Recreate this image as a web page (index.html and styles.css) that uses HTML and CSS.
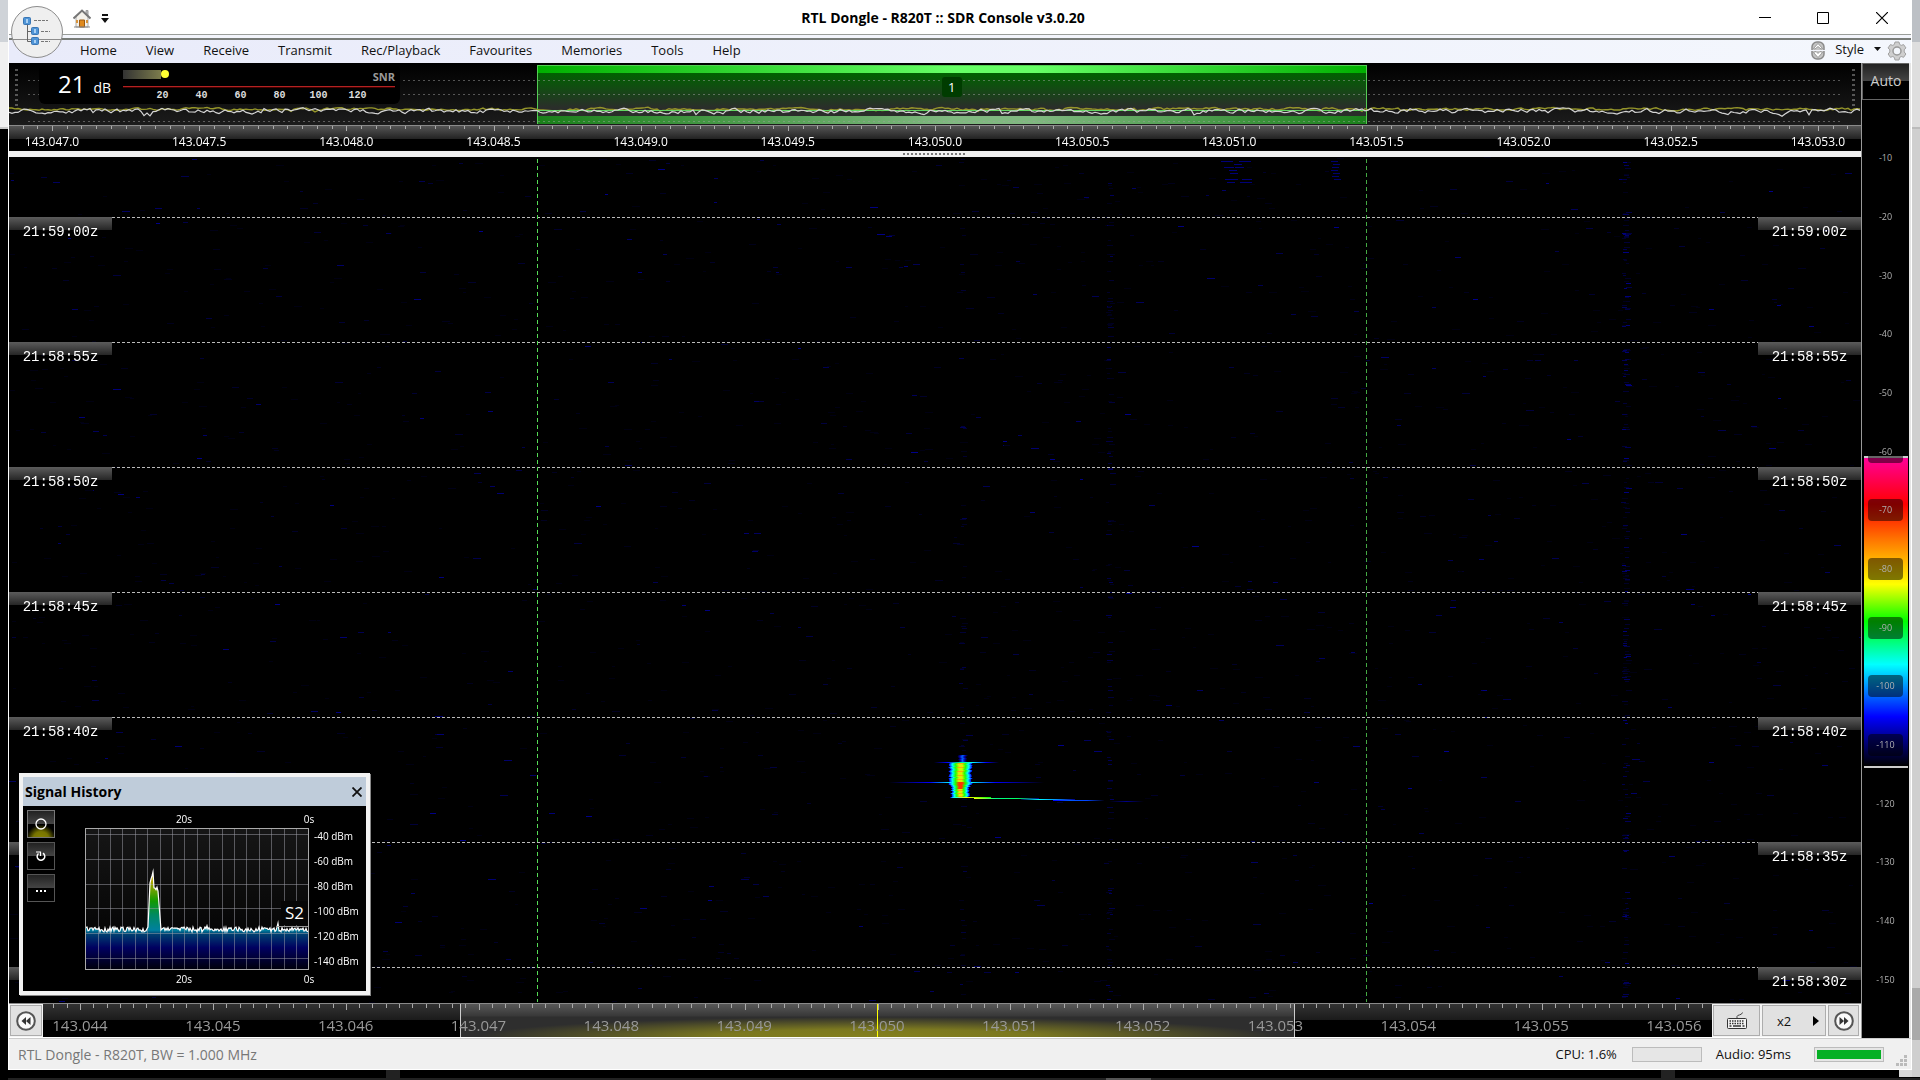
FILE: index.html
```html
<!DOCTYPE html>
<html lang="en">
<head>
<meta charset="utf-8">
<title>RTL Dongle - R820T :: SDR Console v3.0.20</title>
<link rel="stylesheet" href="styles.css">
</head>
<body>
<div class="window">
  <button class="app-button" aria-label="Application menu">
    <svg width="28" height="30" viewBox="0 0 28 30">
      <path d="M4.500 8v17.500h5M4.500 15.500h5" fill="none" stroke="#666" stroke-width="1"/>
      <path d="M11 4.500h14M18 15.500h9M18 25.500h9" stroke="#777" stroke-width="1" stroke-dasharray="3 1"/>
      <g fill="#4f94d6" stroke="#3a76b4"><rect x=".5" y="1.500" width="7" height="7" rx="1"/><rect x="8.500" y="11.500" width="7" height="7" rx="1"/><rect x="8.500" y="21.500" width="7" height="7" rx="1"/></g>
      <g fill="#a9d0f3"><rect x="3" y="3" width="2" height="4"/><rect x="11" y="13" width="2" height="4"/><rect x="11" y="24" width="2" height="3"/></g>
    </svg>
  </button>
  <header class="titlebar">
    <div class="quick">
      <button class="plain" aria-label="Home">
        <svg width="18" height="19" viewBox="0 0 18 19">
          <path d="M13 1.500h2v6h-2z" fill="#bbb" stroke="#999"/>
          <path d="M3 8l6-6 6 6v10H3z" fill="#f4f1ea" stroke="#aaa"/>
          <path d="M.5 9.500L9 1.500l8.500 8" fill="none" stroke="#777" stroke-width="2"/>
          <path d="M6.500 11h5v7h-5z" fill="#e08a1e" stroke="#9a5a14"/>
          <path d="M3 11h2v3H3zM13 11h2v3h-2z" fill="#d8953c"/><path d="M1 18h16" stroke="#888"/>
        </svg>
      </button>
      <button class="plain" aria-label="Customise quick access">
        <svg width="8" height="9" viewBox="0 0 8 9"><path d="M1 0h6v2H1zM0 4h8L4 9z" fill="#111"/></svg>
      </button>
    </div>
    <h1 class="title">RTL Dongle - R820T :: SDR Console v3.0.20</h1>
    <div class="winbuttons">
      <button class="plain" aria-label="Minimise"><svg width="12" height="12" viewBox="0 0 12 12"><path d="M0 5.500h12" stroke="#000"/></svg></button>
      <button class="plain" aria-label="Maximise"><svg width="12" height="12" viewBox="0 0 12 12"><path d="M.5.500h11v11H.5z" fill="none" stroke="#000"/></svg></button>
      <button class="plain" aria-label="Close"><svg width="12" height="12" viewBox="0 0 12 12"><path d="M0 0l12 12M12 0L0 12" stroke="#000" stroke-width="1.200"/></svg></button>
    </div>
  </header>
  <nav class="menubar">
    <a href="#">Home</a><a href="#">View</a><a href="#">Receive</a><a href="#">Transmit</a><a href="#">Rec/Playback</a><a href="#">Favourites</a><a href="#">Memories</a><a href="#">Tools</a><a href="#">Help</a>
    <div class="menuright">
      <button class="plain" aria-label="Collapse ribbon">
        <svg width="14" height="19" viewBox="0 0 14 19"><rect x="1" y="1" width="12" height="17" rx="5" fill="#c4c4c4" stroke="#8a8a8a" stroke-width="1.500"/><path d="M2.500 7.500L7 2.500l4.500 5L10 8 7 5.500 4 8zM2.500 11.500l4.500 5 4.500-5-2.500-1L7 12.500l-2-2z" fill="#fff" stroke="#888" stroke-width=".8"/><path d="M0 9.500h14" stroke="#f2f4fc"/></svg>
      </button>
      <button class="plain style-button">Style <svg width="7" height="4" viewBox="0 0 7 4"><path d="M0 0h7L3.500 4z" fill="#111"/></svg></button>
      <button class="plain" aria-label="Settings">
        <svg width="20" height="20" viewBox="0 0 20 20"><path d="M8 1h4l.6 2.400 1.600 1L16.600 3.600l2.300 3.300-1.700 1.900v2.200l1.700 2-2.300 3.300-2.400-.8-1.600 1L12 19H8l-.6-2.500-1.600-1-2.400.8L1.100 13l1.700-2V8.800L1.100 6.900l2.300-3.300 2.400.8 1.600-1z" fill="#cfcfcf" stroke="#a0a0a0"/><circle cx="10" cy="10" r="4" fill="#f4f7fc" stroke="#999" stroke-width="1.500"/></svg>
      </button>
    </div>
  </nav>

  <main class="main">
    <section class="display">
      <div class="spectrum">
        <div class="passband"><div class="pass-top"></div><div class="pass-body"></div><div class="pass-foot"></div></div>
        <canvas class="layer" id="trace"></canvas>
        <div class="passband-label"><span>1</span></div>
        <div class="meter">
          <div class="reading"><span class="value">21</span><span class="unit">dB</span></div>
          <div class="scale">
            <div class="scale-top"><span class="level"></span><span class="knob"></span><span class="kind">SNR</span></div>
            <div class="redline"></div>
            <div class="scale-nums"><span>20</span><span>40</span><span>60</span><span>80</span><span>100</span><span>120</span></div>
          </div>
        </div>
      </div>
      <div class="ruler">
        <canvas class="layer" id="ticks"></canvas>
        <span>143.047.0</span><span>143.047.5</span><span>143.048.0</span><span>143.048.5</span><span>143.049.0</span><span>143.049.5</span><span>143.050.0</span><span>143.050.5</span><span>143.051.0</span><span>143.051.5</span><span>143.052.0</span><span>143.052.5</span><span>143.053.0</span>
      </div>
      <div class="splitter"><i></i></div>
      <div class="waterfall">
        <canvas class="layer" id="fall"></canvas>
        <div class="lead"></div>
        <div class="row"><time>21:59:00z</time><i></i><time>21:59:00z</time></div>
        <div class="row"><time>21:58:55z</time><i></i><time>21:58:55z</time></div>
        <div class="row"><time>21:58:50z</time><i></i><time>21:58:50z</time></div>
        <div class="row"><time>21:58:45z</time><i></i><time>21:58:45z</time></div>
        <div class="row"><time>21:58:40z</time><i></i><time>21:58:40z</time></div>
        <div class="row"><time>21:58:35z</time><i></i><time>21:58:35z</time></div>
        <div class="row tail"><time>21:58:30z</time><i></i><time>21:58:30z</time></div>
        <div class="edges"></div>

        <section class="history">
          <header><h2>Signal History</h2>
            <button class="plain" aria-label="Close Signal History"><svg width="10" height="10" viewBox="0 0 10 10"><path d="M.5.500l9 9M9.500.500l-9 9" stroke="#111" stroke-width="1.800"/></svg></button>
          </header>
          <div class="history-body">
            <div class="tools">
              <button class="tool on" aria-label="Run"><svg width="12" height="12" viewBox="0 0 12 12"><circle cx="6" cy="6" r="5" fill="none" stroke="#fff" stroke-width="1.300"/></svg></button>
              <button class="tool" aria-label="Reset"><svg width="10" height="10" viewBox="0 0 10 10"><path d="M7 2.200A3.800 3.800 0 1 1 2.500 2.500" fill="none" stroke="#fff" stroke-width="1.500"/><path d="M0 1h4.500v4" fill="none" stroke="#fff" stroke-width="1.200"/></svg></button>
              <button class="tool" aria-label="More"><svg class="dots" width="10" height="2" viewBox="0 0 10 2"><path d="M0 0h2v2H0zM4 0h2v2H4zM8 0h2v2H8z" fill="#fff"/></svg></button>
            </div>
            <div class="chart">
              <div class="secs"><span>20s</span><span>0s</span></div>
              <div class="plot"><canvas class="layer" id="hist"></canvas><span class="sunit">S2</span></div>
              <div class="secs"><span>20s</span><span>0s</span></div>
            </div>
            <div class="dbm"><span>-40 dBm</span><span>-60 dBm</span><span>-80 dBm</span><span>-100 dBm</span><span>-120 dBm</span><span>-140 dBm</span></div>
          </div>
        </section>
      </div>
      <div class="navrow">
        <button class="navbtn square" aria-label="Scroll left"><svg width="20" height="20" viewBox="0 0 20 20"><circle cx="10" cy="10" r="8.800" fill="#fafafa" stroke="#555" stroke-width="2"/><path d="M10 6v8l-4.500-4zM14.500 6v8L10 10z" fill="#333"/></svg></button>
        <div class="band">
          <div class="visible"></div>
          <canvas class="layer" id="bandticks"></canvas>
          <span>143.044</span><span>143.045</span><span>143.046</span><span>143.047</span><span>143.048</span><span>143.049</span><span>143.050</span><span>143.051</span><span>143.052</span><span>143.053</span><span>143.054</span><span>143.055</span><span>143.056</span>
        </div>
        <div class="navbtns">
          <button class="navbtn key" aria-label="Keyboard"><svg width="20" height="17" viewBox="0 0 20 17"><path d="M10 7V4.500c0-2 5-1 5.500-4" fill="none" stroke="#444"/><rect x=".5" y="6.500" width="19" height="10" rx="1" fill="#f2f2f2" stroke="#333"/><path d="M2.500 9h15M2.500 11.500h15" stroke="#333" stroke-width="1.500" stroke-dasharray="1.500 1"/><path d="M2.500 14h2M6 14h8M15.500 14h2" stroke="#333" stroke-width="1.500"/></svg></button>
          <button class="navbtn zoom">x2<svg width="6" height="10" viewBox="0 0 6 10"><path d="M0 0l6 5-6 5z" fill="#000"/></svg></button>
          <button class="navbtn square" aria-label="Scroll right"><svg width="20" height="20" viewBox="0 0 20 20"><circle cx="10" cy="10" r="8.800" fill="#fafafa" stroke="#555" stroke-width="2"/><path d="M10 6v8l4.500-4zM5.500 6v8L10 10z" fill="#333"/></svg></button>
        </div>
      </div>
    </section>
    <aside class="side">
      <button class="auto">Auto</button>
      <div class="levels">
        <div class="rainbow"></div>
        <span>-10</span><span>-20</span><span>-30</span><span>-40</span><span>-50</span><span>-60</span><span>-70</span><span>-80</span><span>-90</span><span>-100</span><span>-110</span><span>-120</span><span>-130</span><span>-140</span><span>-150</span>
      </div>
    </aside>
  </main>

  <footer class="status">
    <span class="device">RTL Dongle - R820T, BW = 1.000 MHz</span>
    <label for="cpu">CPU: 1.6%</label><progress id="cpu" max="100" value="0"></progress>
    <label for="audio">Audio: 95ms</label><progress id="audio" max="100" value="100"></progress>
    <svg class="grip" width="12" height="12" viewBox="0 0 12 12"><path d="M8 0h3v3H8zM4 4h3v3H4zM8 4h3v3H8zM0 8h3v3H0zM4 8h3v3H4zM8 8h3v3H8z" fill="#bbb"/></svg>
  </footer>
</div>
<script src="script.js"></script>
</body>
</html>
```
FILE: styles.css
```css
* { box-sizing: border-box; }
body {
  margin: 0;
  height: 100vh;
  padding: 0 8px 10px;
  font-family: "Open Sans", "Noto Sans", sans-serif;
  font-size: 13px;
  background:
    linear-gradient(#555, #555) 1106px 100% / 45px 2px no-repeat,
    linear-gradient(#222, #222) 386px 100% / 14px 10px no-repeat,
    linear-gradient(#222, #222) 1661px 100% / 14px 10px no-repeat,
    linear-gradient(#aaa, #aaa) 100% 988px / 8px 52px no-repeat,
    linear-gradient(#bcc0c5 42px, #dedede 42px, #dedede 127px, #bbb 127px, #bbb 129px, #cfcfcf 129px) 100% 0 / 8px calc(100% - 3px) no-repeat,
    linear-gradient(#cfd3d8 42px, #f0f0f0 42px, #f0f0f0 127px, #c8c8c8 127px, #c8c8c8 129px, #000 129px) 0 0 / 8px 100% no-repeat,
    linear-gradient(#d8d8d8, #d8d8d8) 100% calc(100% - 3px) / 21px 8px no-repeat,
    linear-gradient(#222, #222) 0 100% / 100% 2px no-repeat,
    #000;
}
h1, h2 { margin: 0; font-size: 14px; font-weight: bold; }
button { font-family: inherit; font-size: 13px; padding: 0; margin: 0; color: #111; }
svg { display: block; }
.plain { border: 0; background: none; display: flex; align-items: center; justify-content: center; }
.layer { position: absolute; left: 0; top: 0; width: 100%; height: 100%; }
.window { position: relative; height: 100%; display: flex; flex-direction: column; background: #fff; border: 0 solid #fff; border-width: 0 1px 1px; }

.app-button { position: absolute; z-index: 5; left: 2px; top: 6px; width: 52px; height: 52px; border-radius: 50%; border: 1px solid #8c8c8c; background: linear-gradient(#8c8c8c, #8c8c8c) 0 32px / 100% 1px no-repeat, #efefef; display: flex; align-items: center; justify-content: center; padding-bottom: 2px; }
.titlebar { flex: none; height: 35px; display: grid; grid-template-columns: 141px 1fr 175px; align-items: center; padding-top: 2px; border-bottom: 1px solid #9a9e9a; color: #000; }
.quick { display: flex; gap: 10px; padding-left: 64px; }
.title { text-align: center; padding-bottom: 2px; }
.winbuttons { display: grid; grid-template-columns: 1fr 1fr 1fr; }
.menubar { flex: none; height: 28px; border-top: 3px solid #f3f5fc; display: flex; align-items: center; gap: 29px; padding: 0 4px 0 71px; background: linear-gradient(90deg, #e9ebfa, #f4f7fd); box-shadow: inset 0 2px #787c78; color: #111; }
.menubar a { color: #111; text-decoration: none; padding-bottom: 2px; }
.menuright { margin-left: auto; display: flex; align-items: center; gap: 6px; }
.style-button { gap: 10px; padding: 0 0 3px 4px; }

.main { flex: 1; min-height: 0; display: grid; grid-template-columns: 1fr 48px; background: #000; border-right: 2px solid #e4e4e4; }
.display { min-width: 0; display: flex; flex-direction: column; color: #fff; }
.spectrum { position: relative; height: 62px; background: linear-gradient(#000, #1c1c1c); flex: none; }
.passband { position: absolute; left: 28.500%; width: 44.800%; top: 2px; bottom: 1px; display: flex; flex-direction: column; border: 1px solid #5c5; border-width: 1px 1px 0; }
.pass-top { height: 7px; background: linear-gradient(90deg, #00b000, #6f6 50%, #6f6 60%, #00b000); }
.pass-body { flex: 1; background: linear-gradient(#006200, #2a2e2a 80%); }
.pass-foot { height: 8px; background: linear-gradient(90deg, #1a801a, #80b880 50%, #80b880 60%, #1a801a); }
.passband-label { position: absolute; left: 28.500%; width: 44.800%; top: 14px; display: flex; justify-content: center; }
.passband-label span { width: 20px; height: 20px; line-height: 20px; text-align: center; border-radius: 3px; background: #003c00; }
.meter { position: absolute; left: 30px; top: 2px; width: 361px; height: 39px; border-radius: 6px; background: #000; display: flex; padding: 5px 5px 0 19px; }
.reading { width: 65px; display: flex; align-items: baseline; gap: 8px; line-height: 28px; }
.value { font-size: 24px; }
.unit { font-size: 14px; }
.scale { flex: 1; }
.scale-top { height: 16px; display: flex; align-items: flex-start; }
.level { width: 38px; height: 9px; background: linear-gradient(90deg, #333, #7c7c4c); }
.knob { width: 8px; height: 8px; border-radius: 50%; background: #ff3; }
.kind { margin-left: auto; color: #999; font-weight: bold; font-size: 11px; line-height: 14px; }
.redline { height: 1px; background: #b22222; box-shadow: 0 1px #400; }
.scale-nums { display: flex; padding: 2px 0 0 20px; font: bold 10px/14px "Liberation Mono", monospace; color: #ddd; }
.scale-nums span { width: 39px; text-align: center; }

.ruler { position: relative; flex: none; height: 26px; border-top: 1px solid #8a8a8a; background: linear-gradient(#555, #222 13px, #000 13px); display: flex; justify-content: space-between; padding: 7px 13px 0; font-size: 12px; line-height: 18px; }
.ruler span { width: 60px; text-align: center; position: relative; }
.splitter { flex: none; height: 6px; background: #f0f0f0; display: flex; justify-content: center; padding-top: 2px; }
.splitter i { width: 64px; height: 2px; background: repeating-linear-gradient(90deg, #777 0 2px, transparent 2px 4px); }

.waterfall { position: relative; flex: 1; min-height: 0; display: flex; flex-direction: column; background: #000; }
.lead { flex: 60 0 0; }
.row { position: relative; flex: 125 0 0; min-height: 0; display: flex; align-items: flex-start; }
.row.tail { flex-grow: 36; }
.row i { flex: 1; height: 1px; background: repeating-linear-gradient(90deg, #bbb 0 3px, transparent 3px 5px); }
.row time { width: 103px; height: 24px; padding-top: 8px; text-align: center; font: 14px/15px "Liberation Mono", monospace; background: linear-gradient(#5c5c5c, #262626) 0 0 / 100% 13px no-repeat; }
.edges { position: absolute; left: 28.500%; width: 44.800%; top: 2px; bottom: 1px; background: repeating-linear-gradient(#5d5 0 4px, transparent 4px 7px) 0 0 / 1px 100% no-repeat, repeating-linear-gradient(#4a4 0 4px, transparent 4px 7px) 100% 0 / 1px 100% no-repeat; }

.history { position: absolute; left: 10px; bottom: 8px; width: 351px; border: 4px solid #f2f2f2; background: #000; box-shadow: 1px 1px #888; }
.history header { height: 29px; display: flex; align-items: center; justify-content: space-between; padding: 0 4px 0 2px; background: #bfccda; color: #000; }
.history-body { display: flex; height: 185px; padding: 4px; }
.tools { width: 28px; display: flex; flex-direction: column; gap: 4px; }
.tool { height: 28px; border: 1px solid #555; background: linear-gradient(#222, #444 13px, #000 13px); display: flex; align-items: center; justify-content: center; }
.tool.on { border-color: #777; background: radial-gradient(circle at 50% 110%, #8a8600 0, #777400 8px, transparent 15px), linear-gradient(#222, #444 13px, #000 13px); }
.tool .dots { margin-top: 5px; }
.chart { width: 224px; margin-left: 30px; }
.secs { height: 18px; display: flex; justify-content: space-between; padding-left: 86px; margin-right: -13px; font-size: 10px; line-height: 18px; }
.secs span { width: 26px; text-align: center; }
.plot { position: relative; height: 142px; border: 1px solid #aaa; background: linear-gradient(#161616, #000); display: flex; justify-content: flex-end; padding-top: 72px; }
.sunit { position: relative; width: 27px; height: 24px; font-size: 17px; line-height: 24px; text-align: center; background: #060606; }
.dbm { margin-left: 5px; padding: 13px 0 14px; font-size: 10px; line-height: 12px; display: flex; flex-direction: column; justify-content: space-around; white-space: nowrap; }

.navrow { flex: none; height: 35px; border-top: 1px solid #8a8a8a; display: grid; grid-template-columns: 34px 1fr 149px; background: #f4f4f4; border-bottom: 1px solid #fff; }
.navbtn { border: 1px solid #adadad; background: #e1e1e1; display: flex; align-items: center; justify-content: center; }
.square { margin: 1px; }
.band { position: relative; background: linear-gradient(#333, #1b1b1b 16px, #000 16px); display: flex; justify-content: space-between; padding: 10px 5px 0 4px; color: #999; font-size: 15px; line-height: 22px; overflow: hidden; }
.band span { position: relative; width: 66px; text-align: center; }
.visible { position: absolute; left: 25%; width: 50%; top: 0; bottom: 0; border: 1px solid #ccc; border-width: 0 1px; background: linear-gradient(#ff0, #ff0) 50% 0 / 1px 100% no-repeat, radial-gradient(ellipse 48% 20px at 50% 100%, #84801e 0, #7b7820 40%, transparent 100%), linear-gradient(#585858, #383838 12px, #2e2e2e 13px); }
.navbtns { display: grid; grid-template-columns: 47px 64px 31px; gap: 2px; padding: 1px; }
.navbtns .square { margin: 0; }
.zoom { gap: 22px; padding-left: 8px; }

.side { border-left: 1px solid #999; display: flex; flex-direction: column; }
.auto { height: 37px; border: 1px solid #666; border-right: 0; background: linear-gradient(#222, #444 17px, #000 17px); color: #ccc; font-size: 14px; padding-bottom: 2px; }
.levels { position: relative; flex: 1; padding: 29px 0; display: grid; grid-auto-rows: 1fr; align-items: center; justify-items: center; font-size: 9px; }
.levels span { position: relative; width: 35px; height: 22px; line-height: 22px; text-align: center; border-radius: 4px; background: rgba(0, 0, 0, .5); color: #b0b0b0; }
.rainbow { position: absolute; left: 2px; right: 1px; top: 38%; height: 33.200%; border: 0 solid #ccc; border-width: 2px 0; background: linear-gradient(#ff0098, #f00 15%, #ff7a00 27%, #ff0 41%, #0f0 53%, #0ff 67%, #00f 84%, #000); }

.status { flex: none; height: 31px; border-top: 1px solid #ccc; background: #f0f0f0; display: flex; align-items: center; padding: 0 3px 0 9px; color: #111; }
.device { color: #777; margin-right: auto; font-size: 14px; }
.status label { margin-right: 15px; }
progress { -webkit-appearance: none; appearance: none; width: 70px; height: 15px; border: 1px solid #bcbcbc; padding: 2px; background: #e6e6e6; margin-right: 14px; }
#audio { margin-left: 8px; margin-right: 12px; }
progress::-webkit-progress-bar { background: #e6e6e6; }
progress::-webkit-progress-value { background: #06b025; }
.grip { margin-top: 14px; }
```
FILE: script.js
```js
// Small seeded generator, so every load draws the same noise.
let seed = 7;
const rnd = () => (seed = (seed * 16807) % 2147483647) / 2147483647;

function surface(id) {
  const c = document.getElementById(id);
  c.width = c.clientWidth;
  c.height = c.clientHeight;
  return [c.getContext('2d'), c.width, c.height];
}

function noiseLine(g, w, base, amp, color, width) {
  g.strokeStyle = color;
  g.lineWidth = width;
  g.beginPath();
  let v = 0;
  for (let x = 0; x <= w; x += 3) {
    v = v * 0.6 + (rnd() - 0.5) * amp;
    const dip = rnd() < 0.03 ? amp * 0.7 : 0;
    g.lineTo(x, base + v + dip);
  }
  g.stroke();
}

function drawTrace() {
  const [g, w, h] = surface('trace');
  g.fillStyle = 'rgba(160,160,160,.5)';
  for (const y of [17, 31, 58]) {
    for (let x = 19; x < w - 20; x += 5) g.fillRect(x, y, 2, 1);
  }
  for (let i = 0; i < 8; i++) {
    g.fillRect(6, 6 + i * 5, 3, 2);
    g.fillRect(w - 9, 6 + i * 5, 3, 2);
  }
  noiseLine(g, w, 46, 2, '#96962a', 1.4);
  g.fillStyle = '#62d862';
  g.fillRect(w * 0.285, 47, w * 0.448, 1);
  noiseLine(g, w, 48, 4, '#d4d4d4', 1.2);
}

function drawTicks(id, first, count, longLen, shortLen) {
  const [g, w] = surface(id);
  const step = (w - first * 2) / count;
  g.fillStyle = '#aaa';
  for (let i = -10; i < count + 10; i++) {
    g.fillRect(Math.round(first + i * step), 0, 1, i % 10 === 0 ? longLen : shortLen);
  }
}

function drawFall() {
  const [g, w, h] = surface('fall');
  const kx = w / 1852, ky = h / 846;
  const dash = (x, y, len, color) => {
    g.fillStyle = color;
    g.fillRect(Math.round(x * kx), Math.round(y * ky), Math.round(len), 1);
  };
  for (let i = 0; i < 2000; i++) {
    const b = 18 + Math.pow(rnd(), 6) * 125;
    dash(rnd() * 1852, rnd() * 846, 3 + rnd() * 5, `rgb(0,0,${b | 0})`);
  }
  for (const [x, n, top] of [[1101, 130, 70], [1617, 220, 110], [954, 60, 60]]) {
    for (let i = 0; i < n; i++) dash(x - 4 + rnd() * 4, rnd() * 846, 3 + rnd() * 3, `rgb(0,0,${25 + Math.pow(rnd(), 2) * top | 0})`);
  }
  for (let i = 0; i < 16; i++) dash(1212 + rnd() * 26, 4 + Math.floor(rnd() * 8) * 3, 4 + rnd() * 8, 'rgb(0,0,120)');
  for (let i = 0; i < 7; i++) dash(1322 + rnd() * 4, 4 + i * 3, 7, 'rgb(0,0,110)');

  // Meteor echo: head, faint side lines and the drifting tail.
  const line = (x1, x2, y, stops) => {
    const gr = g.createLinearGradient(x1 * kx, 0, x2 * kx, 0);
    stops.forEach((s, i) => gr.addColorStop(i / (stops.length - 1), s));
    g.fillStyle = gr;
    g.fillRect(x1 * kx, Math.round(y * ky), (x2 - x1) * kx, 1);
  };
  for (let y = 597; y < 641; y++) {
    const head = y < 605, hot = y > 624 && y < 632;
    if (head && rnd() < 0.2) continue;
    const half = head ? 4 + rnd() * 2 : y > 627 ? 8 + rnd() * 2 : 10 + rnd() * 2;
    const mid = head ? '#06f' : hot ? '#f30' : rnd() < 0.4 ? '#fa0' : '#de0';
    const cx = (head ? 953 : 951) + rnd();
    line(cx - half, cx + half, y, head ? ['#000', '#00a', mid, '#00a', '#000'] : ['#00f', '#0ff', '#2f0', mid, mid, '#2f0', '#0ff', '#00f']);
  }
  line(925, 990, 605, ['#000', '#00f', '#0f8', '#0ff', '#00f', '#000']);
  line(880, 942, 625, ['#000', '#008', '#00f', '#0ff']);
  line(962, 1035, 625, ['#0ff', '#00f', '#008', '#000']);
  line(945, 982, 640, ['#0ff', '#ff0', '#8f0', '#0f0']);
  line(965, 1030, 641, ['#ff0', '#0f8', '#0f6', '#008']);
  line(1012, 1066, 642, ['#004', '#0ff', '#08f', '#008']);
  line(1044, 1095, 643, ['#00f', '#05f', '#04f', '#001']);
  line(1100, 1135, 644, ['#000', '#008', '#000']);
}

function drawHistory() {
  const [g, w, h] = surface('hist');
  const pts = [];
  for (let x = 0; x <= w; x++) {
    let y = 98 + rnd() * 5;
    if (rnd() < 0.02) y -= 4;
    if (x >= 62 && x <= 64) y = 98 - (x - 62) * 22;
    if (x > 64 && x <= 67) y = 53 - (x - 64) * 3;
    if (x === 67) y = 43;
    if (x > 67 && x <= 72) y = 58 + rnd() * 4;
    if (x === 72) y = 62;
    if (x > 72 && x <= 75) y = 62 + (x - 72) * 13;
    pts.push([x, y]);
  }
  const fill = g.createLinearGradient(0, 43, 0, h);
  [[0, '#c8a000'], [0.1, '#b0a800'], [0.3, '#129a00'], [0.44, '#008a60'], [0.6, '#0080a0'], [0.64, '#004070'], [0.78, '#000060'], [1, '#00000c']]
    .forEach(([p, c]) => fill.addColorStop(p, c));
  g.fillStyle = fill;
  g.beginPath();
  g.moveTo(0, h);
  pts.forEach(p => g.lineTo(...p));
  g.lineTo(w, h);
  g.fill();
  g.fillStyle = 'rgba(160,160,170,.5)';
  for (let x = w - 12; x > 0; x -= 12.4) g.fillRect(Math.round(x), 0, 1, h);
  for (let y = 5; y < h; y += 24.8) g.fillRect(0, Math.round(y), w, 1);
  g.strokeStyle = '#fff';
  g.lineWidth = 1.2;
  g.beginPath();
  pts.forEach(p => g.lineTo(...p));
  g.stroke();
  g.fillStyle = '#999';
  g.fillRect(w - 32, 97, 32, 1);
}

function drawAll() {
  seed = 7;
  drawTrace();
  drawTicks('ticks', 43, 120, 5, 3);
  drawTicks('bandticks', 37, 120, 6, 4);
  drawFall();
  drawHistory();
}
drawAll();
window.addEventListener('resize', drawAll);
```
